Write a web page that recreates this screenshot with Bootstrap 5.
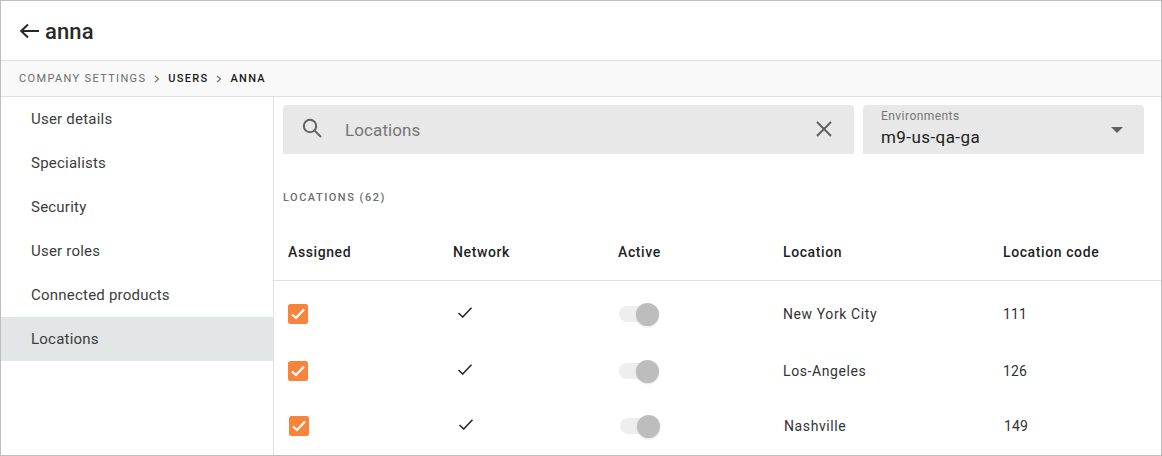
<!doctype html>
<html lang="en"><head><meta charset="utf-8"><title>anna</title>
<link href="https://cdn.jsdelivr.net/npm/bootstrap@5.3.0/dist/css/bootstrap.min.css" rel="stylesheet">
<style>
html,body{height:456px;overflow:hidden;background:#fff}
body{font-family:Roboto,"Liberation Sans",sans-serif;color:#212121}
.frame{width:1162px;height:456px;border:1px solid #bdbdbd;overflow:hidden;display:flex;flex-direction:column}
.topbar{height:59px;padding-left:18px;gap:6px;flex:none}
.topbar h1{font-size:22px;font-weight:500;letter-spacing:.1px;margin:0;padding-top:2px;color:#2a2a2a;line-height:1}
.crumbs{height:37px;flex:none;background:#f9f9f9;border-top:1px solid #e0e0e0;border-bottom:1px solid #e0e0e0;padding:1px 0 0 18px;font-size:11px;font-weight:500;letter-spacing:1.3px;color:#1b1b1b}
.crumbs .first{color:#6b6b6b;font-weight:400;letter-spacing:1.35px}
.crumbs .sep{margin:0 8px 0 8px}
.mainarea{flex:1;min-height:0}
.sidenav{width:273px;flex:none;border-right:1px solid #e0e0e0}
.sideitem{height:44px;padding-left:30px;font-size:15px;letter-spacing:.22px;color:#3c3c3c;text-decoration:none}
.sideitem.current{background:#e3e6e6}
.content{flex:1;min-width:0}
.filters{padding:8px 17px 0 9px;gap:9px}
.fieldbox{height:49px;background:#e8e8e8;border-radius:4px 4px 0 0}
.searchbox{width:571px;padding:0 21px 0 18px}
.searchbox .ph{font-size:17px;letter-spacing:.1px;color:#757575;margin-left:22px;padding-top:2px}
.searchbox .lens{margin-top:-3px}
.searchbox .clear{margin-top:-1px}
.envbox{width:281px;padding:0 21px 0 18px}
.envbox .lbl{font-size:12px;line-height:14px;letter-spacing:.45px;color:#757575;margin-top:4px}
.envbox .val{font-size:17px;line-height:20px;letter-spacing:.43px;color:#212121;margin-top:4px}
.sectitle{font-size:11px;font-weight:500;letter-spacing:1.5px;color:#6e6e6e;padding:38px 0 0 9px;line-height:12px}
.loctable{table-layout:fixed;width:888px;margin:0;color:#212121}
.loctable th,.loctable td{padding:0 0 0 14px;border:0;vertical-align:middle;background:transparent}
.loctable thead th{height:76px;padding-top:21px;font-size:14px;font-weight:500;letter-spacing:.6px;border-bottom:1px solid #e0e0e0;color:#1f1f1f}
.loctable td{font-size:14px;letter-spacing:.6px;color:#333}
.loctable td.codecell{letter-spacing:.1px}
.row-a{height:68px}.row-b{height:46px}.row-c{height:64px}
.row-c td{padding-left:15px}
.tick{width:20px;height:20px;display:block}
.nettick{width:14px;height:11px;display:block;margin:-3px 0 0 5px}
.tog{width:42px;height:24px;position:relative;display:block}
.tog::before{content:"";position:absolute;left:1px;top:4px;width:30px;height:16px;border-radius:8px;background:#eee}
.tog::after{content:"";position:absolute;left:18px;top:1px;width:23px;height:23px;border-radius:50%;background:#bdbdbd;box-shadow:0 1px 2px rgba(0,0,0,.12)}
</style></head>
<body>
<div class="frame">
  <div class="topbar d-flex align-items-center">
    <svg width="20" height="20" viewBox="0 0 20 20" fill="none" stroke="#262626" stroke-width="2"><path d="M20 10H2M9 3.500 2.200 10 9 16.500"/></svg>
    <h1>anna</h1>
  </div>
  <div class="crumbs d-flex align-items-center">
    <span class="first">COMPANY SETTINGS</span>
    <svg class="sep" width="6" height="8" viewBox="0 0 6 8" fill="none" stroke="#666" stroke-width="1.100"><path d="M1 .8 4.500 4 1 7.200"/></svg>
    <span>USERS</span>
    <svg class="sep" width="6" height="8" viewBox="0 0 6 8" fill="none" stroke="#666" stroke-width="1.100"><path d="M1 .8 4.500 4 1 7.200"/></svg>
    <span>ANNA</span>
  </div>
  <div class="mainarea d-flex">
    <nav class="sidenav d-flex flex-column">
      <a class="sideitem d-flex align-items-center" href="#">User details</a>
      <a class="sideitem d-flex align-items-center" href="#">Specialists</a>
      <a class="sideitem d-flex align-items-center" href="#">Security</a>
      <a class="sideitem d-flex align-items-center" href="#">User roles</a>
      <a class="sideitem d-flex align-items-center" href="#">Connected products</a>
      <a class="sideitem current d-flex align-items-center" href="#">Locations</a>
    </nav>
    <div class="content">
      <div class="filters d-flex">
        <div class="fieldbox searchbox d-flex align-items-center">
          <svg class="lens" width="22" height="22" viewBox="0 0 22 22" fill="none" stroke="#616161" stroke-width="2"><circle cx="9" cy="9" r="6.200"/><path d="M13.400 13.400 20 20"/></svg>
          <span class="ph flex-grow-1">Locations</span>
          <svg class="clear" width="18" height="18" viewBox="0 0 18 18" fill="none" stroke="#616161" stroke-width="2"><path d="M2 2 16 16M16 2 2 16"/></svg>
        </div>
        <div class="fieldbox envbox d-flex align-items-center">
          <div class="flex-grow-1 align-self-start"><div class="lbl">Environments</div><div class="val">m9-us-qa-ga</div></div>
          <svg width="12" height="6" viewBox="0 0 12 6" fill="#616161"><path d="M0 0H12L6 6Z"/></svg>
        </div>
      </div>
      <div class="sectitle">LOCATIONS (62)</div>
      <table class="table loctable">
        <colgroup><col style="width:165px"><col style="width:165px"><col style="width:165px"><col style="width:220px"><col></colgroup>
        <thead><tr><th>Assigned</th><th>Network</th><th>Active</th><th>Location</th><th>Location code</th></tr></thead>
        <tbody>
          <tr class="row-a"><td><svg class="tick" viewBox="0 0 20 20"><rect width="20" height="20" rx="2.500" fill="#f8833a"/><path d="M4 10.500 8 14 16 5.500" fill="none" stroke="#fff" stroke-width="2.300"/></svg></td><td><svg class="nettick" viewBox="0 0 14 11"><path d="M.5 6 4.700 10 13.500 .8" fill="none" stroke="#212121" stroke-width="1.500"/></svg></td><td><span class="tog"></span></td><td>New York City</td><td class="codecell">111</td></tr>
          <tr class="row-b"><td><svg class="tick" viewBox="0 0 20 20"><rect width="20" height="20" rx="2.500" fill="#f8833a"/><path d="M4 10.500 8 14 16 5.500" fill="none" stroke="#fff" stroke-width="2.300"/></svg></td><td><svg class="nettick" viewBox="0 0 14 11"><path d="M.5 6 4.700 10 13.500 .8" fill="none" stroke="#212121" stroke-width="1.500"/></svg></td><td><span class="tog"></span></td><td>Los-Angeles</td><td class="codecell">126</td></tr>
          <tr class="row-c"><td><svg class="tick" viewBox="0 0 20 20"><rect width="20" height="20" rx="2.500" fill="#f8833a"/><path d="M4 10.500 8 14 16 5.500" fill="none" stroke="#fff" stroke-width="2.300"/></svg></td><td><svg class="nettick" viewBox="0 0 14 11"><path d="M.5 6 4.700 10 13.500 .8" fill="none" stroke="#212121" stroke-width="1.500"/></svg></td><td><span class="tog"></span></td><td>Nashville</td><td class="codecell">149</td></tr>
        </tbody>
      </table>
    </div>
  </div>
</div>
</body></html>
